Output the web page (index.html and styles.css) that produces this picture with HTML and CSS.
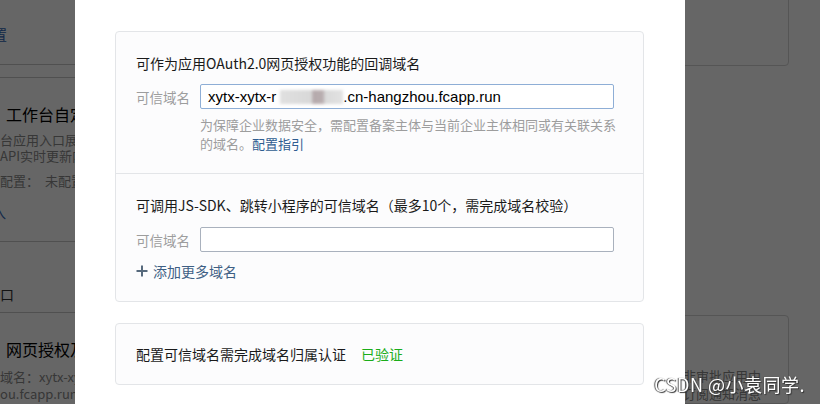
FILE: index.html
```html
<!DOCTYPE html>
<html lang="zh-CN">
<head>
    <meta charset="UTF-8">
    <meta name="viewport" content="width=device-width, initial-scale=1.0">
    <title>可信域名配置</title>
    <link rel="stylesheet" href="styles.css">
</head>
<body>
    <!-- page behind the dialog -->
    <div class="page">
        <div class="side-left">
            <div class="sec sec-top"><span class="link">置</span></div>
            <div class="sec sec-app">
                <div class="sec-title">工作台自定义</div>
                <p class="sec-desc first">台应用入口展示</p>
                <p class="sec-desc">API实时更新内容</p>
                <p class="sec-desc state">配置：<span>未配置</span></p>
                <p class="sec-more">入</p>
            </div>
            <div class="sec sec-entry">口</div>
            <div class="sec sec-web">
                <div class="sec-title">网页授权及</div>
                <p class="sec-desc first">域名：xytx-xytx</p>
                <p class="sec-desc">ou.fcapp.run</p>
            </div>
        </div>
        <div class="side-right">
            <div class="box box-top"></div>
            <div class="box box-bottom">
                <p>在非审批应用中</p>
                <p>可订阅通知消息</p>
            </div>
        </div>
    </div>

    <div class="mask"></div>

    <div class="dialog">
        <div class="card">
            <div class="card-sec">
                <h3>可作为应用OAuth2.0网页授权功能的回调域名</h3>
                <div class="row">
                    <label>可信域名</label>
                    <div class="field field-active">xytx-xytx-r<span class="blur"></span>.cn-hangzhou.fcapp.run</div>
                </div>
                <p class="tip">为保障企业数据安全，需配置备案主体与当前企业主体相同或有关联关系<br>的域名。<a href="#">配置指引</a></p>
            </div>
            <div class="card-sec">
                <h3>可调用JS-SDK、跳转小程序的可信域名（最多10个，需完成域名校验）</h3>
                <div class="row">
                    <label>可信域名</label>
                    <input class="field" type="text">
                </div>
                <div class="add">
                    <svg width="12" height="12" viewBox="0 0 12 12"><path d="M6 0.5V11.5M0.5 6H11.5" stroke="#56697c" stroke-width="2" fill="none"/></svg>
                    <span>添加更多域名</span>
                </div>
            </div>
        </div>
        <div class="card card-verify">配置可信域名需完成域名归属认证<span class="ok">已验证</span></div>
    </div>

    <div class="watermark">CSDN @小袁同学.</div>
</body>
</html>
```

FILE: styles.css
```css
body {
    margin: 0;
    font-family: "Noto Sans CJK SC", "Noto Sans", sans-serif;
    font-size: 14px;
    background-color: #fff;
    overflow: hidden;
}
p {
    margin: 0;
}
.page {
    display: flex;
    justify-content: space-between;
    height: 404px;
}
.side-left {
    width: 75px;
    overflow: hidden;
    white-space: nowrap;
}
.sec {
    border-bottom: 1px solid #c8c8c8;
}
.sec-top {
    padding: 24px 0 20px;
    line-height: 20px;
    margin-bottom: 12px;
}
.link {
    color: #2d62b4;
    margin-left: -7px;
}
.sec-app {
    border-top: 1px solid #c8c8c8;
    padding: 25px 0 21px;
}
.sec-title {
    font-size: 16px;
    line-height: 22px;
    color: #000;
    padding-left: 6px;
}
.sec-desc {
    font-size: 13px;
    line-height: 16px;
    color: #8a8a8a;
}
.sec-desc.first {
    margin-top: 7px;
}
.state {
    margin-top: 9px;
}
.state span {
    margin-left: 6px;
}
.sec-more {
    margin-top: 15px;
    line-height: 16px;
    color: #2d62b4;
    margin-left: -8px;
}
.sec-entry {
    padding: 42px 0 8px;
    line-height: 20px;
    color: #333;
    margin-left: -7px;
    padding-left: 7px;
}
.sec-web {
    border-bottom: none;
    padding-top: 25px;
}
.sec-web .sec-desc {
    line-height: 17px;
}
.sec-web .sec-desc.first {
    margin-top: 8px;
}
.side-right {
    width: 120px;
    margin-right: 31px;
    display: flex;
    flex-direction: column;
}
.box {
    border: 1px solid #d4d4d4;
    border-radius: 4px;
}
.box-top {
    height: 90px;
    margin-top: -26px;
}
.box-bottom {
    margin-top: 249px;
    flex: 1;
    padding-top: 51px;
    font-size: 13px;
    line-height: 18px;
    color: #8a8a8a;
    white-space: nowrap;
}
.mask {
    position: fixed;
    inset: 0;
    background-color: rgba(0, 0, 0, 0.6);
}
.dialog {
    position: fixed;
    top: 0;
    left: 75px;
    width: 610px;
    height: 404px;
    box-sizing: border-box;
    padding: 31px 41px 0 40px;
    background-color: #fff;
}
.card {
    border: 1px solid #e3e5e8;
    border-radius: 4px;
    background-color: #fcfcfd;
}
.card-sec {
    padding: 21px 29px 20px 20px;
}
.card-sec + .card-sec {
    border-top: 1px solid #e3e5e8;
}
h3 {
    margin: 0;
    font-size: 14px;
    font-weight: normal;
    line-height: 20px;
    color: #1a1a1a;
}
.row {
    display: flex;
    align-items: center;
    margin-top: 11px;
}
.card-sec + .card-sec .row {
    margin-top: 12px;
}
.row label {
    width: 64px;
    flex-shrink: 0;
    font-size: 13.5px;
    color: #9d9d9d;
    line-height: 20px;
}
.field {
    flex: 1;
    box-sizing: border-box;
    height: 25px;
    margin: 0;
    padding: 0 7px;
    border: 1px solid #a9b1bd;
    border-radius: 2px;
    background-color: #fff;
    font-family: "Liberation Sans", Arial, sans-serif;
    font-size: 15px;
    line-height: 23px;
    color: #000;
    white-space: nowrap;
    outline: none;
}
.field-active {
    border-color: #8eaed6;
}
.blur {
    display: inline-block;
    width: 63px;
    height: 14px;
    margin-left: 4px;
    vertical-align: -2px;
    background: linear-gradient(90deg, #e0e0e0 0, #d8d8d8 50%, #b5aaac 52%, #b8adaf 68%, #dadada 72%, #e2e2e2 100%);
    filter: blur(1.5px);
}
.tip {
    margin: 6px 0 0 64px;
    font-size: 13px;
    line-height: 19px;
    color: #9d9d9d;
    white-space: nowrap;
}
.tip a {
    color: #2f5d91;
    text-decoration: none;
}
.add {
    display: flex;
    align-items: center;
    gap: 5px;
    margin-top: 9px;
    line-height: 20px;
    color: #3e5f84;
}
.card-verify {
    margin-top: 21px;
    padding: 20px;
    line-height: 20px;
    color: #1a1a1a;
}
.ok {
    margin-left: 15px;
    color: #1aad19;
}
.watermark {
    position: fixed;
    right: 15px;
    bottom: 8px;
    font-size: 18px;
    line-height: 24px;
    letter-spacing: 0.5px;
    color: #fff;
    text-shadow: 1px 1px 1px #333, -1px 0 1px #555;
    white-space: nowrap;
}
```
